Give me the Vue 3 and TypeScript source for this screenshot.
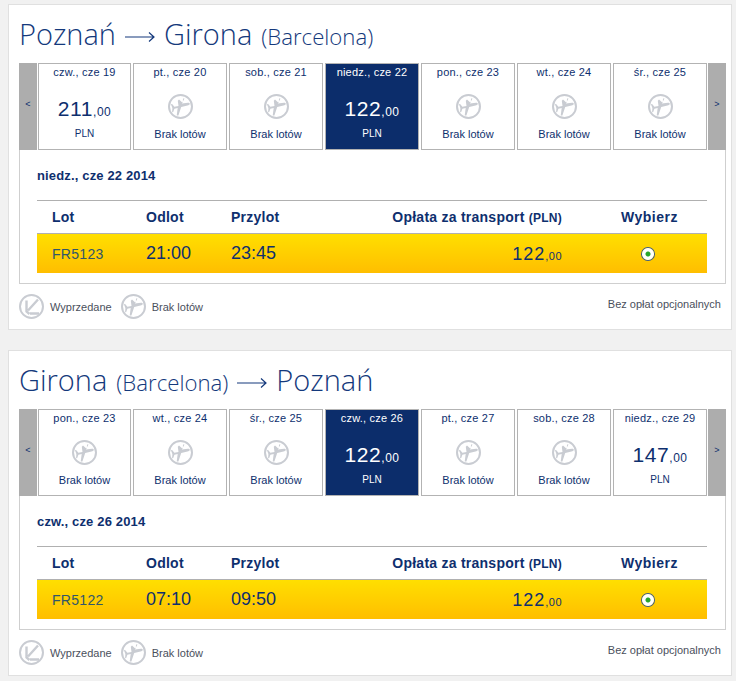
<script setup lang="ts">
interface Day {
  label: string
  price?: number
  selected?: boolean
}

interface Leg {
  from: string
  fromNote?: string
  to: string
  toNote?: string
  days: Day[]
  date: string
  flight: string
  depart: string
  arrive: string
  total: number
}

const legs: Leg[] = [
  {
    from: 'Poznań',
    to: 'Girona',
    toNote: '(Barcelona)',
    days: [
      { label: 'czw., cze 19', price: 211 },
      { label: 'pt., cze 20' },
      { label: 'sob., cze 21' },
      { label: 'niedz., cze 22', price: 122, selected: true },
      { label: 'pon., cze 23' },
      { label: 'wt., cze 24' },
      { label: 'śr., cze 25' }
    ],
    date: 'niedz., cze 22 2014',
    flight: 'FR5123',
    depart: '21:00',
    arrive: '23:45',
    total: 122
  },
  {
    from: 'Girona',
    fromNote: '(Barcelona)',
    to: 'Poznań',
    days: [
      { label: 'pon., cze 23' },
      { label: 'wt., cze 24' },
      { label: 'śr., cze 25' },
      { label: 'czw., cze 26', price: 122, selected: true },
      { label: 'pt., cze 27' },
      { label: 'sob., cze 28' },
      { label: 'niedz., cze 29', price: 147 }
    ],
    date: 'czw., cze 26 2014',
    flight: 'FR5122',
    depart: '07:10',
    arrive: '09:50',
    total: 122
  }
]
</script>

<template>
  <div class="page">
    <section v-for="leg in legs" :key="leg.flight" class="card">
      <h1 class="title">
        <span>{{ leg.from }}</span>
        <small v-if="leg.fromNote">{{ leg.fromNote }}</small>
        <svg class="arrow" viewBox="0 0 30 10">
          <path d="M0 5h29M24 .5 29 5l-5 4.500" />
        </svg>
        <span>{{ leg.to }}</span>
        <small v-if="leg.toNote">{{ leg.toNote }}</small>
      </h1>

      <div class="strip">
        <div class="nav">&lt;</div>
        <div v-for="day in leg.days" :key="day.label" class="day" :class="{ selected: day.selected }">
          <div class="day-label">{{ day.label }}</div>
          <template v-if="day.price">
            <div class="day-price">{{ day.price }}<span>,00</span></div>
            <div class="day-currency">PLN</div>
          </template>
          <template v-else>
            <svg class="icon day-icon" viewBox="0 0 25 25">
              <circle cx="12.5" cy="12.5" r="11.5" />
              <path class="plane" d="M16.500 4.500 13.800 9.500 20 8.700c1.300-.1 2 .6 1.800 1.300-.2.800-1.200 1.300-2.300 1.600l-6.300 1.500-2.800 8.400H8.700l1-7.500-3.300.8-1.200 3.300-1.100.1.300-4.300-1.500-3.700 1.200-.2 2.300 2.800 4.100-.9L9.800 6.700 11 5.500l3.800 3.400 .2-4.400z" />
            </svg>
            <div class="day-none">Brak lotów</div>
          </template>
        </div>
        <div class="nav">&gt;</div>
      </div>

      <div class="panel">
        <div class="panel-date">{{ leg.date }}</div>
        <div class="table">
          <div class="row head">
            <div class="col-flight">Lot</div>
            <div class="col-time">Odlot</div>
            <div class="col-time narrow">Przylot</div>
            <div class="col-price">Opłata za transport <span>(PLN)</span></div>
            <div class="col-pick">Wybierz</div>
          </div>
          <div class="row flight">
            <div class="col-flight number">{{ leg.flight }}</div>
            <div class="col-time hour">{{ leg.depart }}</div>
            <div class="col-time narrow hour">{{ leg.arrive }}</div>
            <div class="col-price amount">{{ leg.total }}<span>,00</span></div>
            <div class="col-pick"><span class="radio"></span></div>
          </div>
        </div>
      </div>

      <div class="foot">
        <div class="legend">
          <svg class="icon" viewBox="0 0 25 25">
            <circle cx="12.5" cy="12.5" r="11.5" />
            <path class="seat" d="M19 5.500 9 16.500M7.500 6.500v11l3 2.500M11 19.500h9" />
          </svg>
          <span>Wyprzedane</span>
        </div>
        <div class="legend">
          <svg class="icon" viewBox="0 0 25 25">
            <circle cx="12.5" cy="12.5" r="11.5" />
            <path class="plane" d="M16.500 4.500 13.800 9.500 20 8.700c1.300-.1 2 .6 1.800 1.300-.2.800-1.200 1.300-2.300 1.600l-6.300 1.500-2.800 8.400H8.700l1-7.500-3.300.8-1.200 3.300-1.100.1.300-4.300-1.500-3.700 1.200-.2 2.300 2.800 4.100-.9L9.800 6.700 11 5.500l3.800 3.400 .2-4.400z" />
          </svg>
          <span>Brak lotów</span>
        </div>
        <div class="extras">Bez opłat opcjonalnych</div>
      </div>
    </section>
  </div>
</template>

<style>
html,
body {
  background: #f1f1f1;
}
</style>

<style scoped>
.page {
  display: flex;
  flex-direction: column;
  gap: 20px;
  width: 724px;
  padding: 4px 0 0 8px;
  font-family: "Liberation Sans", Arial, sans-serif;
  color: #0e2f6e;
}

.card {
  height: 326px;
  box-sizing: border-box;
  padding: 0 5px 0 10px;
  background: #fff;
  border: 1px solid #e0e0e0;
}

.title {
  display: flex;
  align-items: baseline;
  gap: 9px;
  height: 58px;
  margin: 0;
  font-family: "Open Sans", sans-serif;
  font-size: 29px;
  font-weight: 300;
  line-height: 58px;
  white-space: nowrap;
  color: #14397c;
}

.title small {
  font-size: 22.2px;
}

.arrow {
  flex: none;
  align-self: flex-start;
  width: 30px;
  height: 10px;
  margin-top: 27px;
  fill: none;
  stroke: #14397c;
  stroke-width: 1.2;
}

.strip {
  display: flex;
  gap: 2px;
  height: 87px;
}

.nav {
  flex: 0 0 18px;
  background: #adadad;
  font-size: 9px;
  line-height: 82px;
  text-align: center;
}

.nav:first-child {
  margin-right: -1px;
}

.nav:last-child {
  margin-left: -1px;
}

.day {
  flex: 0 0 94px;
  box-sizing: border-box;
  border: 1px solid #b3b3b3;
  text-align: center;
  background: #fff;
}

.day:nth-child(2) {
  flex-basis: 93px;
}

.day.selected {
  background: #0c2d6b;
  color: #fff;
}

.day-label {
  margin-top: 2px;
  font-size: 11px;
  letter-spacing: 0.2px;
  line-height: 13px;
}

.day-price {
  margin-top: 17px;
  font-size: 21px;
  letter-spacing: 0.6px;
  line-height: 26px;
}

.day-price span {
  font-size: 12px;
  letter-spacing: 0.5px;
}

.day-currency {
  margin-top: 3px;
  font-size: 10px;
  line-height: 12px;
}

.day-icon {
  display: block;
  margin: 15px auto 0;
}

.day-none {
  margin-top: 9px;
  font-size: 11px;
  line-height: 13px;
}

.icon {
  flex: none;
  width: 25px;
  height: 25px;
}

.icon circle {
  fill: none;
  stroke: #c9ccd2;
  stroke-width: 2;
}

.icon .plane {
  fill: #c9ccd2;
}

.icon .seat {
  fill: none;
  stroke: #c9ccd2;
  stroke-width: 2.4;
}

.panel {
  height: 134px;
  box-sizing: border-box;
  padding: 0 18px 0 17px;
  border: 1px solid #cfcfcf;
  border-top: 0;
}

.panel-date {
  height: 50px;
  font-size: 13px;
  font-weight: 700;
  letter-spacing: 0.15px;
  line-height: 52px;
}

.table {
  border-top: 1px solid #b0b0b0;
}

.row {
  display: flex;
  align-items: center;
  padding-left: 15px;
}

.head {
  height: 32px;
  font-size: 14px;
  font-weight: 700;
  letter-spacing: 0.25px;
}

.head .col-price span {
  font-size: 12px;
}

.head .col-pick {
  letter-spacing: 0.5px;
  padding-left: 1px;
  box-sizing: border-box;
}

.flight {
  height: 39px;
  border-top: 1px solid #b0b0b0;
  background: linear-gradient(#ffdf00, #ffbe00);
}

.col-flight {
  flex: 0 0 94px;
}

.col-time {
  flex: 0 0 85px;
}

.col-time.narrow {
  flex-basis: 100px;
}

.col-price {
  flex: 1 1 0;
  margin-right: 29px;
  text-align: right;
}

.col-pick {
  flex: 0 0 116px;
  text-align: center;
}

.number {
  font-size: 14px;
  letter-spacing: 0.3px;
  color: #31566a;
}

.hour {
  font-size: 18px;
}

.amount {
  padding-top: 2px;
  font-size: 18px;
  letter-spacing: 1px;
}

.amount span {
  font-size: 11px;
  letter-spacing: 0.5px;
}

.radio {
  display: block;
  width: 8px;
  height: 8px;
  margin: 0 auto 0 51px;
  border: 2px solid #fff;
  border-radius: 50%;
  background: radial-gradient(circle, #2aa52a 0 2px, #fff 3px);
  box-shadow: 0 0 0 1px #3b5c86;
}

.foot {
  display: flex;
  align-items: flex-start;
  gap: 9px;
  padding-top: 10px;
  font-size: 11px;
  color: #4a4f5c;
}

.legend {
  display: flex;
  align-items: center;
  gap: 6px;
}

.extras {
  margin: 4px 0 0 auto;
  padding-right: 5px;
}
</style>
